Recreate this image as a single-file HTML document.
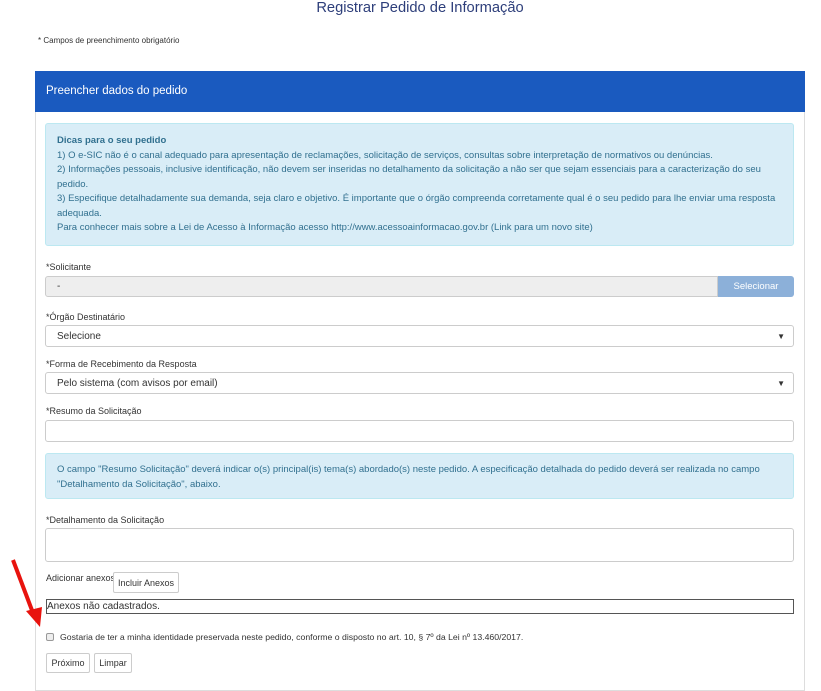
<!DOCTYPE html>
<html><head><meta charset="utf-8"><style>
*{box-sizing:border-box;margin:0;padding:0}
body{width:821px;height:677px;background:#fff;font-family:"Liberation Sans",sans-serif;position:relative;overflow:hidden;color:#333}
.a{position:absolute}
.lbl{font-size:9px;color:#333}
.inp{position:absolute;left:45px;width:749px;border:1px solid #ccc;border-radius:3px;background:#fff;font-size:10px;padding-left:11px;display:flex;align-items:center}
.btn{position:absolute;border:1px solid #ccc;border-radius:2px;background:#fff;font-size:9px;display:flex;align-items:center;justify-content:center}
.info{position:absolute;left:45px;width:749px;background:#d9edf7;border:1px solid #bce8f1;border-radius:3px;color:#31708f;font-size:9.5px;line-height:14.5px;padding:9px 11px}
.arr{position:absolute;right:8px;font-size:8px;color:#333}
</style></head><body>
<div class="a" style="left:0;width:840px;top:0px;text-align:center;font-size:14.7px;color:#2d3e7a">Registrar Pedido de Informação</div>
<div class="a" style="left:38px;top:36px;font-size:8px">* Campos de preenchimento obrigatório</div>
<div class="a" style="left:35px;top:71px;width:770px;height:620px;border:1px solid #ddd"></div>
<div class="a" style="left:35px;top:71px;width:770px;height:41px;background:#1a5abf;color:#fff;font-size:11.5px;padding:14px 11px">Preencher dados do pedido</div>
<div class="info" style="top:123px;height:123px;padding-top:10px">
<b style="font-weight:bold">Dicas para o seu pedido</b><br>
1) O e-SIC não é o canal adequado para apresentação de reclamações, solicitação de serviços, consultas sobre interpretação de normativos ou denúncias.<br>
2) Informações pessoais, inclusive identificação, não devem ser inseridas no detalhamento da solicitação a não ser que sejam essenciais para a caracterização do seu pedido.<br>
3) Especifique detalhadamente sua demanda, seja claro e objetivo. É importante que o órgão compreenda corretamente qual é o seu pedido para lhe enviar uma resposta adequada.<br>
Para conhecer mais sobre a Lei de Acesso à Informação acesso http://www.acessoainformacao.gov.br (Link para um novo site)
</div>
<div class="a lbl" style="left:46px;top:262px">*Solicitante</div>
<div class="inp" style="top:276px;height:21px;width:673px;background:#eee;border-radius:3px 0 0 3px">-</div>
<div class="a" style="left:718px;top:276px;width:76px;height:21px;background:#8cb0d9;color:#fff;font-size:9.5px;display:flex;align-items:center;justify-content:center;border-radius:0 3px 3px 0">Selecionar</div>
<div class="a lbl" style="left:46px;top:312px">*Órgão Destinatário</div>
<div class="inp" style="top:325px;height:22px">Selecione<span class="arr">▼</span></div>
<div class="a lbl" style="left:46px;top:359px">*Forma de Recebimento da Resposta</div>
<div class="inp" style="top:372px;height:22px">Pelo sistema (com avisos por email)<span class="arr">▼</span></div>
<div class="a lbl" style="left:46px;top:406px">*Resumo da Solicitação</div>
<div class="inp" style="top:420px;height:22px"></div>
<div class="info" style="top:453px;height:46px;padding-top:9px">O campo "Resumo Solicitação" deverá indicar o(s) principal(is) tema(s) abordado(s) neste pedido. A especificação detalhada do pedido deverá ser realizada no campo "Detalhamento da Solicitação", abaixo.</div>
<div class="a lbl" style="left:46px;top:515px">*Detalhamento da Solicitação</div>
<div class="inp" style="top:528px;height:34px"></div>
<div class="a lbl" style="left:46px;top:573px">Adicionar anexos</div>
<div class="btn" style="left:113px;top:572px;width:66px;height:21px">Incluir Anexos</div>
<div class="a" style="left:46px;top:599px;width:748px;height:15px;border:1px solid #555;font-size:10px;line-height:13px">Anexos não cadastrados.</div>
<div class="a" style="left:46px;top:633px;width:8px;height:8px;border:1px solid #999;border-radius:2px;background:#eee"></div>
<div class="a lbl" style="left:60px;top:632px;font-size:8.7px">Gostaria de ter a minha identidade preservada neste pedido, conforme o disposto no art. 10, § 7º da Lei nº 13.460/2017.</div>
<div class="btn" style="left:46px;top:653px;width:44px;height:20px">Próximo</div>
<div class="btn" style="left:94px;top:653px;width:38px;height:20px">Limpar</div>
<svg class="a" style="left:0;top:555px" width="50" height="75"><line x1="13" y1="5" x2="33" y2="58" stroke="#e8130e" stroke-width="4"/><polygon points="26,56 42,52 40,72" fill="#e8130e"/></svg>
</body></html>
